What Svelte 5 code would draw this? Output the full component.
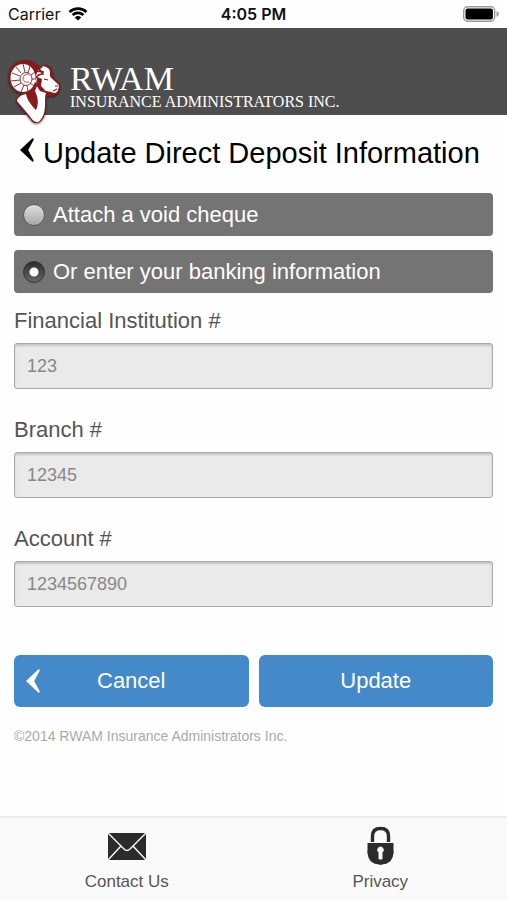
<script lang="ts">
	let method = $state('banking');

	let fields = $state([
		{ id: 'institution', label: 'Financial Institution #', hint: '123', value: '' },
		{ id: 'branch', label: 'Branch #', hint: '12345', value: '' },
		{ id: 'account', label: 'Account #', hint: '1234567890', value: '' }
	]);

	function handleCancel() {
		for (const field of fields) {
			field.value = '';
		}
	}

	function handleSubmit(e: SubmitEvent) {
		e.preventDefault();
	}
</script>

{#snippet arrow()}
	<svg class="arrow" viewBox="0 0 14 24" aria-hidden="true">
		<path d="M12.500 0.300 L0 12 L12.500 23.700 Q13.800 23.800 13.700 22.300 L8.200 12 L13.700 1.700 Q13.800 0.200 12.500 0.300 Z" />
	</svg>
{/snippet}

<div class="screen">
	<div class="status">
		<div class="carrier">
			<span>Carrier</span>
			<svg class="wifi" viewBox="0 0 20 14" aria-hidden="true">
				<path d="M1.500 5 A12.400 12.400 0 0 1 18.500 5" />
				<path d="M4.600 8 A8 8 0 0 1 15.400 8" />
				<path class="dot" d="M10 13.600 L6.800 10.400 A4.700 4.700 0 0 1 13.200 10.400 Z" />
			</svg>
		</div>
		<div class="time">4:05 PM</div>
		<svg class="battery" viewBox="0 0 36 16" aria-hidden="true">
			<rect x="0.7" y="0.7" width="31" height="14.6" rx="4" fill="#fff" stroke="#999" stroke-width="1.4" />
			<rect x="2.500" y="2.500" width="27.400" height="11" rx="2" />
			<path d="M33.500 5 Q36 6.500 36 8 Q36 9.500 33.500 11 Z" fill="#999" />
		</svg>
	</div>

	<header>
		<svg class="ram" viewBox="0 0 54 66" aria-hidden="true">
			<!-- red outline behind the whole animal -->
			<path fill="#861a1c" d="M17 0 C25 0 30 4 32 8 C34 4 40 4 43 8 C46 12 44 15 47 19 C51 22 53 25 52 29 C51 35 46 37 40 36 L38 39 C39 48 38 55 34 60 C30 65 25 64 22 59 L8 42 C7 38 12 35 15 34 C6 33 0 26 0 16 C1 7 8 0 17 0 Z" />
			<!-- head and muzzle -->
			<path fill="#fff" d="M29 12 C31 8 34 9 35 6 C38 7 42 8 42 12 L42 16 C44 20 49 22 51 26 C50 30 50 33 46 33 C43 32 41 31 37 31 L30 27 L27 21 Z" />
			<!-- neck -->
			<path fill="#fff" d="M29 26 L32 31 L38 33 C36 38 38 45 36 53 C34 59 31 63 28 62 C25 61 23 58 20 54 L9 41 C9 38 13 35 18 34 C19 40 24 46 28 50 C31 44 30 37 27 31 Z" />
			<ellipse cx="15" cy="18" rx="12.500" ry="14" fill="#fff" />
			<g fill="none" stroke="#861a1c" stroke-width="0.9">
				<ellipse cx="18" cy="19" rx="6" ry="6.500" />
				<path d="M15 4 L17 12 M8 7 L13 13 M4 13 L12 16 M3 21 L12 20 M6 27 L13 23 M13 32 L16 25 M20 31 L19 26 M26 26 L22 23 M22 6 L20 13 M27 12 L23 15 M28 19 L24 19" />
				<path d="M21 14 Q15 14 15 19 Q16 23 21 22" stroke-width="0.7" />
				<path d="M28 12 Q33 10 35 14 Q30 14 28 18 M36 12 Q33 12 31 9" stroke-width="1.400" />
				<path d="M36 19 L40 20 M45 31 L49 29 M47 26 L50 26" stroke-width="1.200" />
			</g>
			<path fill="#861a1c" d="M29 17 L34 19 L33 26 L38 31 L31 29 L28 25 Z" />
		</svg>
		<div class="brand">
			<div class="name">RWAM</div>
			<div class="tagline">INSURANCE ADMINISTRATORS INC.</div>
		</div>
	</header>

	<main>
		<div class="title">
			<button class="back" type="button" aria-label="Back">{@render arrow()}</button>
			<h1>Update Direct Deposit Information</h1>
		</div>

		<form onsubmit={handleSubmit}>
			<label class="option">
				<input type="radio" name="method" value="cheque" bind:group={method} />
				<span>Attach a void cheque</span>
			</label>
			<label class="option">
				<input type="radio" name="method" value="banking" bind:group={method} />
				<span>Or enter your banking information</span>
			</label>

			{#each fields as field (field.id)}
				<div class="field">
					<label for={field.id}>{field.label}</label>
					<input
						id={field.id}
						type="text"
						inputmode="numeric"
						placeholder={field.hint}
						bind:value={field.value}
					/>
				</div>
			{/each}

			<div class="actions">
				<button type="button" onclick={handleCancel}>
					<span class="button-icon">{@render arrow()}</span>
					Cancel
				</button>
				<button type="submit">Update</button>
			</div>
		</form>

		<p class="copyright">©2014 RWAM Insurance Administrators Inc.</p>
	</main>

	<nav>
		<a href="#contact">
			<svg class="tab-icon" viewBox="0 0 40 40" aria-hidden="true">
				<rect x="1" y="7" width="38" height="27" rx="1" />
				<path d="M1 7 L17 23 Q20 26 23 23 L39 7 M1 34 L14 20 M39 34 L26 20" fill="none" stroke="#fafafa" stroke-width="1.400" />
			</svg>
			Contact Us
		</a>
		<a href="#privacy">
			<svg class="tab-icon" viewBox="0 0 40 40" aria-hidden="true">
				<path d="M12.500 16 V10 Q12.500 2.500 20.500 2.500 Q28.500 2.500 28.500 10 V16" fill="none" stroke="#2b2b2b" stroke-width="3.400" />
				<path d="M7.500 17 H33.500 V26 Q33 34 20.500 39 Q8 34 7.500 26 Z" />
				<path d="M7.500 25 H33.500 Q33.500 38.500 20.500 38.500 Q7.500 38.500 7.500 25 Z" />
				<path d="M20.500 21 A3 3 0 0 1 22 26.500 V33 H19 V26.500 A3 3 0 0 1 20.500 21 Z" fill="#fafafa" stroke="#fafafa" />
			</svg>
			Privacy
		</a>
	</nav>
</div>

<style>
	:global(body) {
		margin: 0;
		background: #fefefe;
	}

	.screen {
		display: flex;
		flex-direction: column;
		min-height: 100vh;
		font-family: 'Liberation Sans', Arial, sans-serif;
		color: #555;
	}

	button,
	input {
		font-family: inherit;
	}

	.status {
		display: grid;
		grid-template-columns: 1fr auto 1fr;
		align-items: center;
		height: 28px;
		padding: 0 8px;
		font-family: Inter, sans-serif;
		font-size: 16px;
		color: #111;
	}

	.carrier {
		display: flex;
		align-items: center;
		gap: 8px;
	}

	.wifi {
		width: 20px;
		height: 14px;
		fill: none;
		stroke: #000;
		stroke-width: 2.6;
	}

	.wifi .dot {
		fill: #000;
		stroke: none;
	}

	.time {
		font-weight: 600;
	}

	.battery {
		justify-self: end;
		width: 36px;
		height: 16px;
	}

	header {
		display: flex;
		align-items: flex-start;
		gap: 8px;
		height: 55px;
		padding: 32px 8px 0;
		background: #4e4e4e;
		color: #fff;
	}

	.ram {
		flex: none;
		width: 54px;
		height: 66px;
		filter: drop-shadow(0 1px 1px rgba(0, 0, 0, 0.5));
	}

	.brand {
		padding-top: 4px;
		font-family: 'Liberation Serif', 'Times New Roman', serif;
		white-space: nowrap;
	}

	.name {
		font-size: 34px;
		line-height: 30px;
	}

	.tagline {
		font-size: 16px;
		line-height: 16px;
	}

	main {
		flex: 1;
		padding: 16px 14px;
	}

	.title {
		display: flex;
		align-items: flex-start;
		gap: 9px;
		height: 44px;
		padding-left: 6px;
	}

	.back {
		padding: 7px 0 0;
		border: none;
		background: none;
		cursor: pointer;
	}

	.arrow {
		display: block;
		width: 14px;
		height: 24px;
		fill: currentColor;
	}

	h1 {
		margin: 0;
		font-size: 29px;
		font-weight: normal;
		line-height: 44px;
		color: #000;
		white-space: nowrap;
	}

	.back .arrow {
		color: #000;
	}

	form {
		padding-top: 18px;
	}

	.option {
		display: flex;
		align-items: center;
		gap: 8px;
		height: 43px;
		margin-bottom: 14px;
		padding: 0 9px;
		border-radius: 4px;
		background: #747474;
		font-size: 22px;
		color: #fff;
	}

	.option input {
		appearance: none;
		box-sizing: border-box;
		width: 22px;
		height: 22px;
		margin: 0;
		border: 1px solid #5c5c5c;
		border-radius: 50%;
		background: linear-gradient(#dedede, #a8a8a8);
	}

	.option input:checked {
		border-color: #333;
		background: radial-gradient(circle, #fff 4px, transparent 5px),
			linear-gradient(#2c2c2c, #666);
	}

	.field {
		display: flex;
		flex-direction: column;
		margin-bottom: 27px;
	}

	.field label {
		height: 36px;
		font-size: 22px;
		line-height: 28px;
	}

	.field input {
		box-sizing: border-box;
		height: 46px;
		padding: 0 12px;
		border: 1px solid #aaa;
		border-radius: 3px;
		background: #eaeaea;
		box-shadow: inset 0 2px 2px rgba(0, 0, 0, 0.16);
		font-size: 18px;
		color: #555;
	}

	.field input::placeholder {
		color: #888;
		opacity: 1;
	}

	.actions {
		display: grid;
		grid-template-columns: 1fr 1fr;
		gap: 10px;
		padding-top: 21px;
	}

	.actions button {
		position: relative;
		height: 52px;
		border: none;
		border-radius: 6px;
		background: #4489c9;
		font-size: 22px;
		color: #fff;
		cursor: pointer;
	}

	.button-icon {
		position: absolute;
		top: 14px;
		left: 12px;
	}

	.copyright {
		margin: 20px 0 0;
		font-size: 14px;
		line-height: 18px;
		color: #aaa;
	}

	nav {
		display: grid;
		grid-template-columns: 1fr 1fr;
		border-top: 2px solid #ebebeb;
		background: #fafafa;
	}

	nav a {
		display: flex;
		flex-direction: column;
		align-items: center;
		gap: 6px;
		padding: 8px 0;
		font-size: 17px;
		line-height: 20px;
		color: #555;
		text-decoration: none;
	}

	.tab-icon {
		width: 40px;
		height: 40px;
		fill: #2b2b2b;
	}
</style>
